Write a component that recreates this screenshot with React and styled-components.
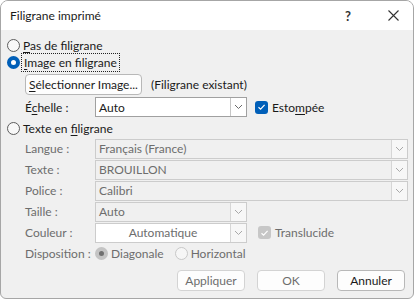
import React from 'react';
import styled, { createGlobalStyle } from 'styled-components';

const GlobalStyle = createGlobalStyle`
  html, body {
    margin: 0;
    padding: 0;
    background: #ffffff;
  }
  body {
    font-family: Lato, 'Noto Sans', sans-serif;
    font-size: 12px;
    color: #1a1a1a;
  }
`;

const Window = styled.div`
  width: 414px;
  height: 299px;
  box-sizing: border-box;
  border: 1px solid #a6a6a6;
  border-radius: 8px 8px 6px 6px;
  background: #f0f0f0;
  overflow: hidden;
  display: flex;
  flex-direction: column;
`;

const TitleBar = styled.div`
  height: 29px;
  background: #ffffff;
  display: flex;
  align-items: center;
  padding-left: 9px;
  flex-shrink: 0;
`;

const Title = styled.div`
  flex: 1;
  color: #1a1a1a;
`;

const TitleButton = styled.div`
  width: ${p => p.w}px;
  height: 29px;
  display: flex;
  align-items: center;
  justify-content: center;
  font-weight: 700;
  color: #333;
  font-size: 13px;
`;

const Body = styled.div`
  flex: 1;
  padding: 5px 7px 0 6px;
  display: flex;
  flex-direction: column;
`;

const Row = styled.div`
  display: flex;
  align-items: center;
  height: ${p => p.h || 21}px;
  margin-top: ${p => p.mt || 0}px;
  padding-left: ${p => p.indent || 0}px;
`;

const RadioCircle = styled.span`
  width: 13px;
  height: 13px;
  border-radius: 50%;
  box-sizing: border-box;
  flex-shrink: 0;
  margin: 0 3px 0 0;
  border: ${p => (p.checked ? (p.disabled ? '4px solid #c4c4c4' : '4px solid #005fb8') : p.disabled ? '1px solid #c8c8c8' : '1px solid #5d5d5d')};
  background: ${p => (p.checked ? (p.disabled ? '#6f6f6f' : '#ffffff') : p.disabled ? '#f6f6f6' : '#f8f8f8')};
`;

const Label = styled.span`
  color: ${p => (p.disabled ? '#6d6d6d' : '#1a1a1a')};
  margin-right: ${p => p.mr || 0}px;
  white-space: nowrap;
  u {
    text-decoration: underline;
    text-underline-offset: 2px;
  }
`;

const Focused = styled.span`
  outline: 1px dotted #222;
  outline-offset: 1px;
  padding: 0 1px;
`;

const FieldLabel = styled.span`
  width: 70px;
  flex-shrink: 0;
  color: ${p => (p.disabled ? '#6d6d6d' : '#1a1a1a')};
  white-space: nowrap;
  u {
    text-decoration: underline;
    text-underline-offset: 2px;
  }
`;

const Select = styled.div`
  width: ${p => p.w}px;
  height: 20px;
  box-sizing: border-box;
  border: 1px solid ${p => (p.disabled ? '#cccccc' : '#a0a0a0')};
  background: ${p => (p.disabled && !p.white ? '#f0f0f0' : '#ffffff')};
  display: flex;
  align-items: stretch;
  flex-shrink: 0;
`;

const SelectValue = styled.div`
  flex: 1;
  display: flex;
  align-items: center;
  justify-content: ${p => (p.center ? 'center' : 'flex-start')};
  padding-left: ${p => (p.center ? 0 : 3)}px;
  color: ${p => (p.disabled ? '#6d6d6d' : '#1a1a1a')};
  white-space: nowrap;
  overflow: hidden;
`;

const Chevron = styled.div`
  width: 15px;
  border-left: 1px solid ${p => (p.disabled ? '#d6d6d6' : '#c6c6c6')};
  background: ${p => (p.disabled ? '#f7f7f7' : '#ffffff')};
  display: flex;
  align-items: center;
  justify-content: center;
`;

const Check = styled.span`
  width: 13px;
  height: 13px;
  border-radius: 3px;
  background: ${p => (p.disabled ? '#c7c7c7' : '#005fb8')};
  display: flex;
  align-items: center;
  justify-content: center;
  flex-shrink: 0;
  margin-left: ${p => p.ml || 0}px;
  margin-right: 4px;
`;

const Button = styled.div`
  width: ${p => p.w || 68}px;
  height: 21px;
  box-sizing: border-box;
  background: #fdfdfd;
  border: 1px solid ${p => (p.primary ? '#b8b8b8' : '#d3d3d3')};
  border-radius: 4px;
  display: flex;
  align-items: center;
  justify-content: center;
  color: ${p => (p.disabled ? '#6d6d6d' : '#1a1a1a')};
  white-space: nowrap;
  flex-shrink: 0;
`;

const Note = styled.span`
  margin-left: 9px;
  white-space: nowrap;
`;

const Footer = styled.div`
  display: flex;
  justify-content: flex-end;
  gap: 12px;
  margin-top: 6px;
  padding-right: 1px;
`;

const Chev = ({ disabled }) => (
  <svg width="9" height="6" viewBox="0 0 9 6">
    <path d="M1 1 L4.5 4.5 L8 1" fill="none" stroke={disabled ? '#a8a8a8' : '#6a6a6a'} strokeWidth="1" />
  </svg>
);

const Tick = () => (
  <svg width="9" height="8" viewBox="0 0 9 8">
    <path d="M1.5 4.2 L3.6 6.2 L7.6 1.8" fill="none" stroke="#fff" strokeWidth="1.2" />
  </svg>
);

const Dropdown = ({ w, value, disabled, white, center }) => (
  <Select w={w} disabled={disabled} white={white}>
    <SelectValue disabled={disabled} center={center}>{value}</SelectValue>
    <Chevron disabled={disabled}><Chev disabled={disabled} /></Chevron>
  </Select>
);

const Field = ({ label, children }) => (
  <Row h={21} indent={18}>
    <FieldLabel disabled>{label}</FieldLabel>
    {children}
  </Row>
);

export default function App() {
  return (
    <>
      <GlobalStyle />
      <Window>
        <TitleBar>
          <Title>Filigrane imprimé</Title>
          <TitleButton w={50}>?</TitleButton>
          <TitleButton w={40}>
            <svg width="11" height="11" viewBox="0 0 11 11">
              <path d="M0.5 0.5 L10.5 10.5 M10.5 0.5 L0.5 10.5" stroke="#333" strokeWidth="1.1" />
            </svg>
          </TitleButton>
        </TitleBar>
        <Body>
          <Row h={18} mt={1}>
            <RadioCircle />
            <Label><u>P</u>as de filigrane</Label>
          </Row>
          <Row h={17}>
            <RadioCircle checked />
            <Focused><Label><u>I</u>mage en filigrane</Label></Focused>
          </Row>
          <Row h={20} mt={3} indent={18}>
            <Button w={117} primary>
              <Label><u>S</u>électionner Image...</Label>
            </Button>
            <Note>(Filigrane existant)</Note>
          </Row>
          <Row h={20} mt={3} indent={18}>
            <FieldLabel>É<u>c</u>helle :</FieldLabel>
            <Dropdown w={152} value="Auto" />
            <Check ml={8}><Tick /></Check>
            <Label>Esto<u>m</u>pée</Label>
          </Row>
          <Row h={20} mt={1}>
            <RadioCircle />
            <Label>Texte en <u>f</u>iligrane</Label>
          </Row>
          <Field label="Langue :"><Dropdown w={313} value="Français (France)" disabled /></Field>
          <Field label="Texte :"><Dropdown w={313} value="BROUILLON" disabled /></Field>
          <Field label="Police :"><Dropdown w={313} value="Calibri" disabled /></Field>
          <Field label="Taille :"><Dropdown w={152} value="Auto" disabled /></Field>
          <Field label="Couleur :">
            <Dropdown w={152} value="Automatique" disabled white center />
            <Check disabled ml={11}><Tick /></Check>
            <Label disabled>Translucide</Label>
          </Field>
          <Row h={21} indent={18}>
            <FieldLabel disabled>Disposition :</FieldLabel>
            <RadioCircle checked disabled />
            <Label disabled mr={11}>Diagonale</Label>
            <RadioCircle disabled />
            <Label disabled>Horizontal</Label>
          </Row>
          <Footer>
            <Button disabled>Appliquer</Button>
            <Button disabled>OK</Button>
            <Button primary>Annuler</Button>
          </Footer>
        </Body>
      </Window>
    </>
  );
}
